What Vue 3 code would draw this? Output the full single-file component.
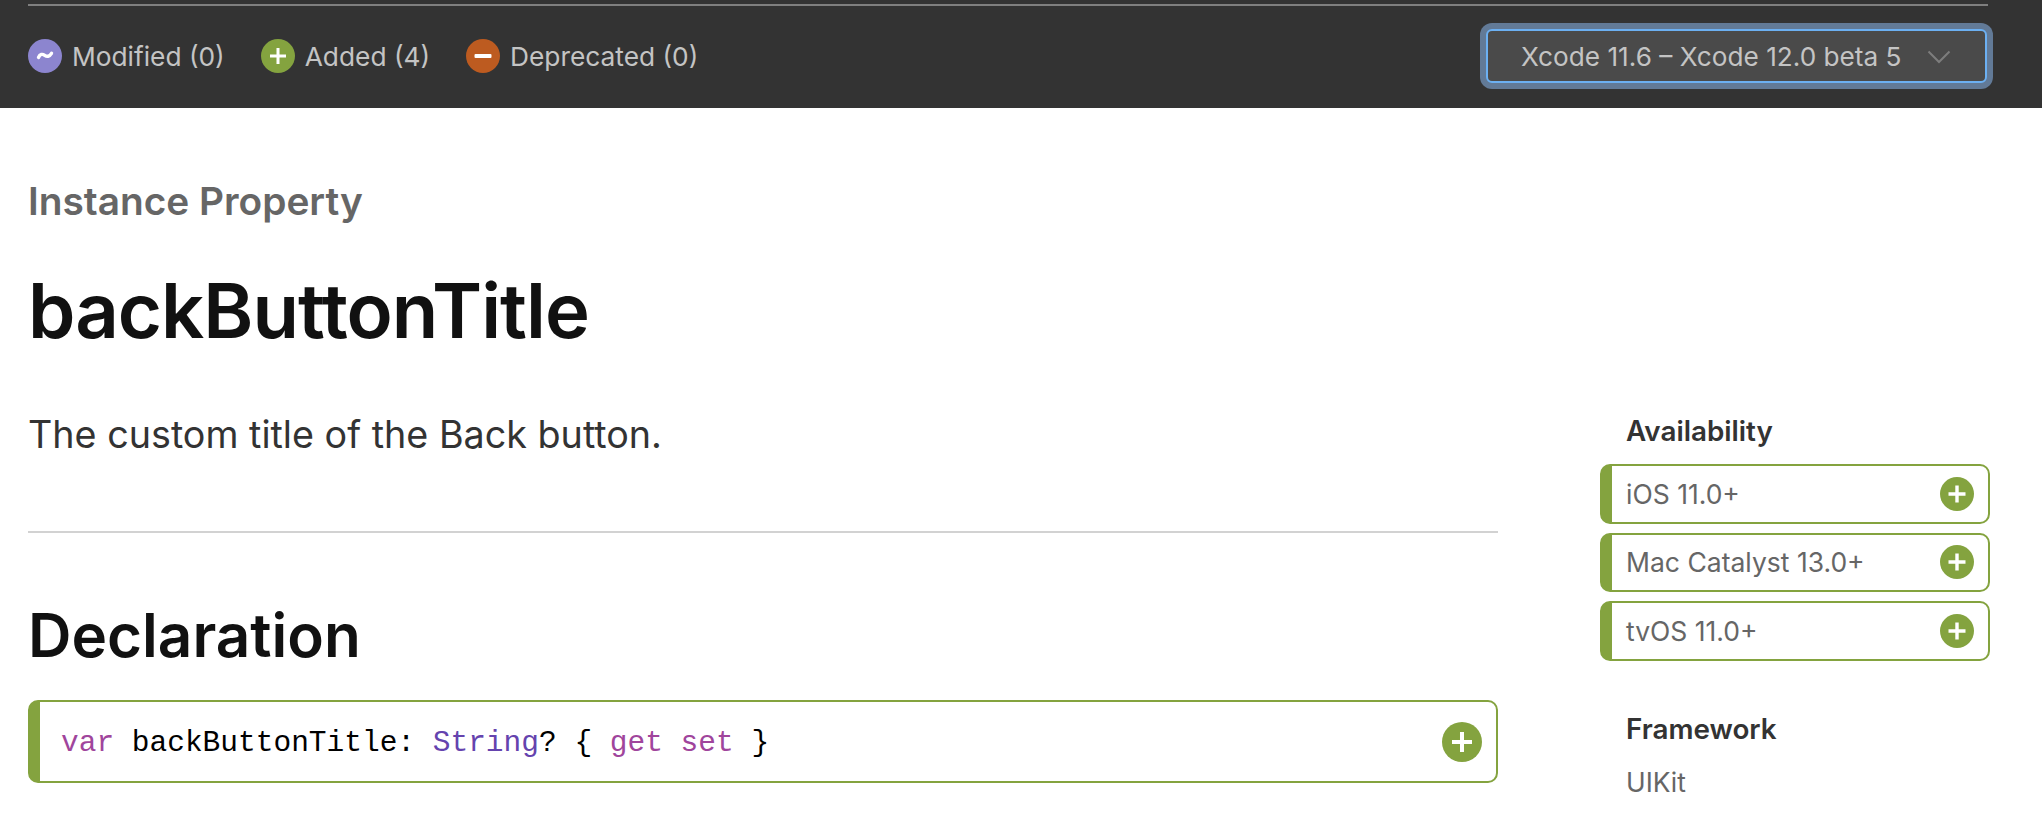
<script setup>
const legend = [
  { label: 'Modified (0)', cls: 'mod', kind: 'tilde' },
  { label: 'Added (4)', cls: 'add', kind: 'plus' },
  { label: 'Deprecated (0)', cls: 'dep', kind: 'minus' },
]
const platforms = ['iOS 11.0+', 'Mac Catalyst 13.0+', 'tvOS 11.0+']
</script>

<template>
  <div class="page">
    <header class="topbar">
      <div class="rule"></div>
      <div class="bar-row">
        <ul class="legend">
          <li v-for="item in legend" :key="item.label" class="legend-item">
            <span class="dot" :class="item.cls">
              <svg viewBox="0 0 34 34" width="34" height="34">
                <path v-if="item.kind === 'tilde'" d="M10.5 18.5c1.5-3.6 4-3.8 6.2-2.2s4.6 1.6 6.8-2" fill="none" stroke="#fff" stroke-width="3.4" stroke-linecap="round" />
                <path v-else-if="item.kind === 'plus'" d="M9 15.5h6.5V9h3v6.5H25v3h-6.5V25h-3v-6.5H9z" fill="#fff" />
                <rect v-else x="8.5" y="15" width="17" height="4" rx="1" fill="#fff" />
              </svg>
            </span>
            <span class="legend-label">{{ item.label }}</span>
          </li>
        </ul>
        <div class="select">
          <span>Xcode 11.6 – Xcode 12.0 beta 5</span>
          <svg class="chev" viewBox="0 0 24 14" width="24" height="14">
            <path d="M1.5 1.5 12 12 22.5 1.5" fill="none" stroke="#7d7d7d" stroke-width="2" />
          </svg>
        </div>
      </div>
    </header>

    <div class="content">
      <p class="eyebrow">Instance Property</p>
      <h1 class="title">backButtonTitle</h1>
      <div class="columns">
        <main class="main">
          <p class="abstract">The custom title of the Back button.</p>
          <hr class="divider" />
          <h2 class="section">Declaration</h2>
          <div class="code-box">
            <code class="code"><span class="kw">var</span> backButtonTitle: <span class="ty">String</span>? { <span class="kw">get</span> <span class="kw">set</span> }</code>
            <svg viewBox="0 0 40 40" width="40" height="40" class="code-plus">
              <circle cx="20" cy="20" r="20" fill="#84a33f" />
              <path d="M10 18h8v-8h4v8h8v4h-8v8h-4v-8h-8z" fill="#fff" />
            </svg>
          </div>
        </main>
        <aside class="side">
          <h3 class="side-head">Availability</h3>
          <ul class="platforms">
            <li v-for="p in platforms" :key="p" class="platform">
              <span>{{ p }}</span>
              <svg viewBox="0 0 34 34" width="34" height="34">
                <circle cx="17" cy="17" r="17" fill="#84a33f" />
                <path d="M8.5 15.3h6.8V8.5h3.4v6.8h6.8v3.4h-6.8v6.8h-3.4v-6.8H8.5z" fill="#fff" />
              </svg>
            </li>
          </ul>
          <h3 class="side-head framework">Framework</h3>
          <p class="side-text">UIKit</p>
        </aside>
      </div>
    </div>
  </div>
</template>

<style>
html, body { margin: 0; background: #fff; overflow: hidden; }
</style>

<style scoped>
.page { width: 2042px; height: 832px; overflow: hidden; font-family: Inter, "Liberation Sans", sans-serif; color: #333; }
.topbar { height: 108px; box-sizing: border-box; background: #333; padding: 4px 48px 0 28px; }
.rule { width: 1960px; height: 2px; background: #7f7f7f; }
.bar-row { display: flex; align-items: center; justify-content: space-between; height: 78px; margin-top: 11px; }
.legend { display: flex; gap: 36px; list-style: none; margin: 0; padding: 0; }
.legend-item { display: flex; align-items: center; gap: 10px; }
.dot { width: 34px; height: 34px; border-radius: 50%; display: block; }
.dot svg { display: block; }
.mod { background: #8c85cf; }
.add { background: #84a33f; }
.dep { background: #bd5b20; }
.legend-label { font-size: 26.3px; color: #c4c4c4; }
.select { box-sizing: border-box; width: 501px; height: 54px; margin-right: 7px; display: flex; align-items: center; justify-content: space-between; padding: 0 34px 0 33px; background: #4a4a4a; border: 2px solid #6cb0f2; border-radius: 6px; box-shadow: 0 0 0 6px #627a97; color: #c4c4c4; font-size: 26.2px; }
.chev { margin-top: 2px; }

.content { padding: 70px 0 0 28px; }
.eyebrow { margin: 0; font-size: 38.8px; line-height: 46px; font-weight: 600; color: #666; }
.title { margin: 43px 0 0; font-size: 76px; line-height: 86px; font-weight: 600; color: #111; letter-spacing: -1px; }
.columns { display: flex; gap: 102px; margin-top: 57px; }
.main { width: 1470px; }
.abstract { margin: 0; font-size: 37.7px; line-height: 48px; color: #333; }
.divider { border: 0; height: 2px; background: #d2d2d2; margin: 73px 0 0; }
.section { margin: 67px 0 0; font-size: 60.2px; line-height: 72px; font-weight: 600; color: #111; }
.code-box { box-sizing: border-box; height: 83px; margin-top: 28px; display: flex; align-items: center; justify-content: space-between; padding: 0 14px 0 21px; border: 2px solid #84a33f; border-left-width: 12px; border-radius: 10px; }
.code { font-family: "Liberation Mono", "DejaVu Sans Mono", monospace; font-size: 29.5px; color: #000; padding-top: 2px; }
.kw { color: #a0459c; }
.ty { color: #6543ae; }
.side { width: 390px; padding-top: 5px; }
.side-head { margin: 0 0 0 26px; font-size: 27.8px; line-height: 32px; font-weight: 600; color: #333; }
.platforms { list-style: none; margin: 17px 0 0; padding: 0; display: flex; flex-direction: column; gap: 9px; }
.platform { box-sizing: border-box; height: 59.5px; display: flex; align-items: center; justify-content: space-between; padding: 0 14px 0 14px; border: 2px solid #84a33f; border-left-width: 12px; border-radius: 10px; font-size: 26.5px; color: #666; }
.platform svg { display: block; }
.framework { margin-top: 52.5px; }
.side-text { margin: 21px 0 0 26px; font-size: 26.4px; line-height: 32px; color: #666; }
</style>
